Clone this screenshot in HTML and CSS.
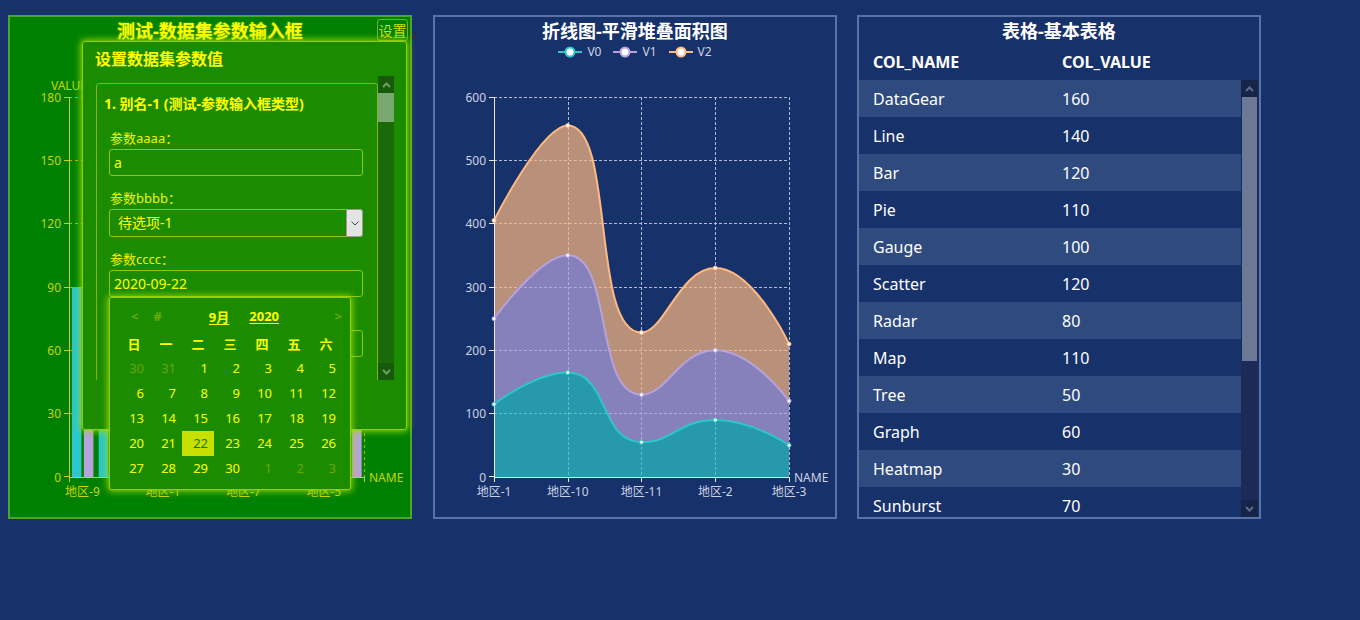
FILE: index.html
```html
<!DOCTYPE html>
<html lang="zh-CN">
<head>
<meta charset="utf-8">
<title>DataGear 看板</title>
<link rel="stylesheet" href="styles.css">
</head>
<body>
<div class="board">

  <!-- Panel 1: bar chart with parameter dialog -->
  <section class="panel panel-green">
    <header class="p1-head">
      <div class="p-title title-yellow">测试-数据集参数输入框</div>
      <button class="btn-settings">设置</button>
    </header>
    <svg class="chart" width="400" height="472" viewBox="10 45 400 472">
      <g class="grid-y" stroke="#a6bc00" stroke-dasharray="3 3" stroke-width="1">
        <line x1="69" y1="97.5" x2="364" y2="97.5"/>
        <line x1="69" y1="160.5" x2="364" y2="160.5"/>
        <line x1="69" y1="223.5" x2="364" y2="223.5"/>
        <line x1="69" y1="287.5" x2="364" y2="287.5"/>
        <line x1="69" y1="350.5" x2="364" y2="350.5"/>
        <line x1="69" y1="413.5" x2="364" y2="413.5"/>
        <line x1="364.5" y1="97" x2="364.5" y2="477"/>
      </g>
      <g fill="#2ec7c9">
        <rect x="71.9" y="287" width="9.5" height="190"/>
        <rect x="98.7" y="265.9" width="9.5" height="211.1"/>
        <rect x="125.5" y="223.7" width="9.5" height="253.3"/>
        <rect x="152.4" y="329.2" width="9.5" height="147.8"/>
        <rect x="179.2" y="160.3" width="9.5" height="316.7"/>
        <rect x="206" y="350.3" width="9.5" height="126.7"/>
        <rect x="232.8" y="202.6" width="9.5" height="274.4"/>
        <rect x="259.6" y="308.1" width="9.5" height="168.9"/>
        <rect x="286.4" y="244.8" width="9.5" height="232.2"/>
        <rect x="313.3" y="392.6" width="9.5" height="84.4"/>
        <rect x="340.1" y="287" width="9.5" height="190"/>
      </g>
      <g fill="#b6a2de">
        <rect x="83.9" y="350.3" width="9.5" height="126.7"/>
        <rect x="110.7" y="308.1" width="9.5" height="168.9"/>
        <rect x="137.5" y="371.4" width="9.5" height="105.6"/>
        <rect x="164.4" y="287" width="9.5" height="190"/>
        <rect x="191.2" y="392.6" width="9.5" height="84.4"/>
        <rect x="218" y="244.8" width="9.5" height="232.2"/>
        <rect x="244.8" y="329.2" width="9.5" height="147.8"/>
        <rect x="271.6" y="265.9" width="9.5" height="211.1"/>
        <rect x="298.4" y="350.3" width="9.5" height="126.7"/>
        <rect x="325.3" y="223.7" width="9.5" height="253.3"/>
        <rect x="352.1" y="329.2" width="9.5" height="147.8"/>
      </g>
      <g stroke="#cad400" stroke-width="1">
        <line x1="69.5" y1="97" x2="69.5" y2="477"/>
        <line x1="64" y1="97.5" x2="69" y2="97.5"/>
        <line x1="64" y1="160.5" x2="69" y2="160.5"/>
        <line x1="64" y1="223.5" x2="69" y2="223.5"/>
        <line x1="64" y1="287.5" x2="69" y2="287.5"/>
        <line x1="64" y1="350.5" x2="69" y2="350.5"/>
        <line x1="64" y1="413.5" x2="69" y2="413.5"/>
        <line x1="64" y1="476.5" x2="69" y2="476.5"/>
        <line x1="69" y1="477.5" x2="365" y2="477.5"/>
        <line x1="69.5" y1="477" x2="69.5" y2="482"/>
        <line x1="364.5" y1="477" x2="364.5" y2="482"/>
      </g>
      <g class="axis-text yellow-text">
        <text x="69" y="85" text-anchor="middle">VALUE</text>
        <text x="61" y="97" text-anchor="end">180</text>
        <text x="61" y="160.3" text-anchor="end">150</text>
        <text x="61" y="223.7" text-anchor="end">120</text>
        <text x="61" y="287" text-anchor="end">90</text>
        <text x="61" y="350.3" text-anchor="end">60</text>
        <text x="61" y="413.7" text-anchor="end">30</text>
        <text x="61" y="477" text-anchor="end">0</text>
        <text x="82.4" y="491" text-anchor="middle">地区-9</text>
        <text x="162.9" y="491" text-anchor="middle">地区-1</text>
        <text x="243.3" y="491" text-anchor="middle">地区-7</text>
        <text x="323.8" y="491" text-anchor="middle">地区-5</text>
        <text x="369" y="477" text-anchor="start">NAME</text>
      </g>
    </svg>

    <div class="dialog">
      <div class="dialog-title">设置数据集参数值</div>
      <div class="dialog-body">
        <div class="form-scroll">
          <div class="form-box">
            <div class="section-head">1. 别名-1 (测试-参数输入框类型)</div>
            <div class="field">
              <label>参数aaaa：</label>
              <div class="input">a</div>
            </div>
            <div class="field">
              <label>参数bbbb：</label>
              <div class="select">
                <span class="select-text">待选项-1</span>
                <span class="select-arrow"><svg width="8" height="5" viewBox="0 0 8 5"><polyline points="0.5,0.5 4,4 7.5,0.5" fill="none" stroke="#444" stroke-width="1"/></svg></span>
              </div>
            </div>
            <div class="field">
              <label>参数cccc：</label>
              <div class="input">2020-09-22</div>
            </div>
            <div class="field">
              <label>参数dddd：</label>
              <div class="input"></div>
            </div>
          </div>
        </div>
        <div class="fscroll">
          <div class="fs-btn"><svg width="9" height="6" viewBox="0 0 9 6"><polyline points="1,5 4.5,1.5 8,5" fill="none" stroke="#6fa062" stroke-width="2"/></svg></div>
          <div class="fs-thumb"></div>
          <div class="fs-track"></div>
          <div class="fs-btn"><svg width="9" height="6" viewBox="0 0 9 6"><polyline points="1,1 4.5,4.5 8,1" fill="none" stroke="#6fa062" stroke-width="2"/></svg></div>
        </div>
      </div>

      <div class="datepicker">
        <div class="dp-head">
          <span class="dp-nav dp-prev">&lt;</span>
          <span class="dp-nav dp-hash">#</span>
          <span class="dp-ym dp-month">9月</span>
          <span class="dp-ym dp-year">2020</span>
          <span class="dp-nav dp-next">&gt;</span>
        </div>
        <div class="dp-week"><span>日</span><span>一</span><span>二</span><span>三</span><span>四</span><span>五</span><span>六</span></div>
        <div class="dp-row"><span class="muted">30</span><span class="muted">31</span><span>1</span><span>2</span><span>3</span><span>4</span><span>5</span></div>
        <div class="dp-row"><span>6</span><span>7</span><span>8</span><span>9</span><span>10</span><span>11</span><span>12</span></div>
        <div class="dp-row"><span>13</span><span>14</span><span>15</span><span>16</span><span>17</span><span>18</span><span>19</span></div>
        <div class="dp-row"><span>20</span><span>21</span><span class="sel">22</span><span>23</span><span>24</span><span>25</span><span>26</span></div>
        <div class="dp-row"><span>27</span><span>28</span><span>29</span><span>30</span><span class="muted">1</span><span class="muted">2</span><span class="muted">3</span></div>
      </div>
    </div>
  </section>

  <!-- Panel 2: smooth stacked area chart -->
  <section class="panel panel-blue panel-line">
    <div class="p-title">折线图-平滑堆叠面积图</div>
    <div class="legend">
      <span class="legend-item"><svg width="24" height="14" viewBox="0 0 24 14"><line x1="0" y1="7" x2="24" y2="7" stroke="#2ec7c9" stroke-width="2"/><circle cx="12" cy="7" r="4.5" fill="#fff" stroke="#2ec7c9" stroke-width="2"/></svg>V0</span>
      <span class="legend-item"><svg width="24" height="14" viewBox="0 0 24 14"><line x1="0" y1="7" x2="24" y2="7" stroke="#b6a2de" stroke-width="2"/><circle cx="12" cy="7" r="4.5" fill="#fff" stroke="#b6a2de" stroke-width="2"/></svg>V1</span>
      <span class="legend-item"><svg width="24" height="14" viewBox="0 0 24 14"><line x1="0" y1="7" x2="24" y2="7" stroke="#ffb980" stroke-width="2"/><circle cx="12" cy="7" r="4.5" fill="#fff" stroke="#ffb980" stroke-width="2"/></svg>V2</span>
    </div>
    <svg class="chart" width="400" height="458" viewBox="435 59 400 458">
      <g stroke="#b4bdd3" stroke-dasharray="3 2" stroke-width="1">
        <line x1="494" y1="97.5" x2="789" y2="97.5"/>
        <line x1="494" y1="160.5" x2="789" y2="160.5"/>
        <line x1="494" y1="223.5" x2="789" y2="223.5"/>
        <line x1="494" y1="287.5" x2="789" y2="287.5"/>
        <line x1="494" y1="350.5" x2="789" y2="350.5"/>
        <line x1="494" y1="413.5" x2="789" y2="413.5"/>
        <line x1="568.5" y1="97" x2="568.5" y2="477"/>
        <line x1="641.5" y1="97" x2="641.5" y2="477"/>
        <line x1="715.5" y1="97" x2="715.5" y2="477"/>
        <line x1="789.5" y1="97" x2="789.5" y2="477"/>
      </g>
      <path fill="#2ec7c9" fill-opacity="0.7" d="M494,404.2 C494,404.2 535.2,372.5 567.75,372.5 C608.9,372.5 599.6,442.2 641.5,442.2 C673.3,442.2 678.6,420 715.25,420 C752.35,420 789,445.3 789,445.3 L789,477 L494,477 Z"/>
      <path fill="#b6a2de" fill-opacity="0.7" d="M494,318.7 C494,318.7 539.6,255.3 567.75,255.3 C613.4,255.3 593.8,394.7 641.5,394.7 C667.5,394.7 679.1,350.3 715.25,350.3 C752.8,350.3 789,401 789,401 L789,445.3 C789,445.3 752.35,420 715.25,420 C678.6,420 673.3,442.2 641.5,442.2 C599.6,442.2 608.9,372.5 567.75,372.5 C535.2,372.5 494,404.2 494,404.2 Z"/>
      <path fill="#ffb980" fill-opacity="0.7" d="M494,220.5 C494,220.5 541.7,125.5 567.75,125.5 C615.4,125.5 590.5,332.6 641.5,332.6 C664.25,332.6 679.8,268 715.25,268 C753.55,268 789,344 789,344 L789,401 C789,401 752.8,350.3 715.25,350.3 C679.1,350.3 667.5,394.7 641.5,394.7 C593.8,394.7 613.4,255.3 567.75,255.3 C539.6,255.3 494,318.7 494,318.7 Z"/>
      <g fill="none" stroke-width="2">
        <path stroke="#2ec7c9" d="M494,404.2 C494,404.2 535.2,372.5 567.75,372.5 C608.9,372.5 599.6,442.2 641.5,442.2 C673.3,442.2 678.6,420 715.25,420 C752.35,420 789,445.3 789,445.3"/>
        <path stroke="#b6a2de" d="M494,318.7 C494,318.7 539.6,255.3 567.75,255.3 C613.4,255.3 593.8,394.7 641.5,394.7 C667.5,394.7 679.1,350.3 715.25,350.3 C752.8,350.3 789,401 789,401"/>
        <path stroke="#ffb980" d="M494,220.5 C494,220.5 541.7,125.5 567.75,125.5 C615.4,125.5 590.5,332.6 641.5,332.6 C664.25,332.6 679.8,268 715.25,268 C753.55,268 789,344 789,344"/>
      </g>
      <g stroke="#e6eaf2" stroke-width="1">
        <line x1="494.5" y1="97" x2="494.5" y2="477"/>
        <line x1="489" y1="97.5" x2="494" y2="97.5"/>
        <line x1="489" y1="160.5" x2="494" y2="160.5"/>
        <line x1="489" y1="223.5" x2="494" y2="223.5"/>
        <line x1="489" y1="287.5" x2="494" y2="287.5"/>
        <line x1="489" y1="350.5" x2="494" y2="350.5"/>
        <line x1="489" y1="413.5" x2="494" y2="413.5"/>
        <line x1="489" y1="476.5" x2="494" y2="476.5"/>
        <line x1="494" y1="477.5" x2="790" y2="477.5"/>
        <line x1="494.5" y1="477" x2="494.5" y2="482"/>
        <line x1="568.5" y1="477" x2="568.5" y2="482"/>
        <line x1="641.5" y1="477" x2="641.5" y2="482"/>
        <line x1="715.5" y1="477" x2="715.5" y2="482"/>
        <line x1="789.5" y1="477" x2="789.5" y2="482"/>
      </g>
      <g fill="#fff" stroke-width="1">
        <g stroke="#2ec7c9">
          <circle cx="494" cy="404.2" r="2"/><circle cx="567.75" cy="372.5" r="2"/><circle cx="641.5" cy="442.2" r="2"/><circle cx="715.25" cy="420" r="2"/><circle cx="789" cy="445.3" r="2"/>
        </g>
        <g stroke="#b6a2de">
          <circle cx="494" cy="318.7" r="2"/><circle cx="567.75" cy="255.3" r="2"/><circle cx="641.5" cy="394.7" r="2"/><circle cx="715.25" cy="350.3" r="2"/><circle cx="789" cy="401" r="2"/>
        </g>
        <g stroke="#ffb980">
          <circle cx="494" cy="220.5" r="2"/><circle cx="567.75" cy="125.5" r="2"/><circle cx="641.5" cy="332.6" r="2"/><circle cx="715.25" cy="268" r="2"/><circle cx="789" cy="344" r="2"/>
        </g>
      </g>
      <g class="axis-text blue-text">
        <text x="486" y="97" text-anchor="end">600</text>
        <text x="486" y="160.3" text-anchor="end">500</text>
        <text x="486" y="223.7" text-anchor="end">400</text>
        <text x="486" y="287" text-anchor="end">300</text>
        <text x="486" y="350.3" text-anchor="end">200</text>
        <text x="486" y="413.7" text-anchor="end">100</text>
        <text x="486" y="477" text-anchor="end">0</text>
        <text x="494" y="491" text-anchor="middle">地区-1</text>
        <text x="567.75" y="491" text-anchor="middle">地区-10</text>
        <text x="641.5" y="491" text-anchor="middle">地区-11</text>
        <text x="715.25" y="491" text-anchor="middle">地区-2</text>
        <text x="789" y="491" text-anchor="middle">地区-3</text>
        <text x="794" y="477" text-anchor="start">NAME</text>
      </g>
    </svg>
  </section>

  <!-- Panel 3: basic table -->
  <section class="panel panel-blue panel-table">
    <div class="p-title">表格-基本表格</div>
    <div class="t-head"><span>COL_NAME</span><span>COL_VALUE</span></div>
    <div class="t-body">
      <div class="t-rows">
        <div class="t-row"><span>DataGear</span><span>160</span></div>
        <div class="t-row"><span>Line</span><span>140</span></div>
        <div class="t-row"><span>Bar</span><span>120</span></div>
        <div class="t-row"><span>Pie</span><span>110</span></div>
        <div class="t-row"><span>Gauge</span><span>100</span></div>
        <div class="t-row"><span>Scatter</span><span>120</span></div>
        <div class="t-row"><span>Radar</span><span>80</span></div>
        <div class="t-row"><span>Map</span><span>110</span></div>
        <div class="t-row"><span>Tree</span><span>50</span></div>
        <div class="t-row"><span>Graph</span><span>60</span></div>
        <div class="t-row"><span>Heatmap</span><span>30</span></div>
        <div class="t-row"><span>Sunburst</span><span>70</span></div>
        <div class="t-row"><span>Sankey</span><span>40</span></div>
        <div class="t-row"><span>Funnel</span><span>90</span></div>
        <div class="t-row"><span>Boxplot</span><span>60</span></div>
        <div class="t-row"><span>Parallel</span><span>20</span></div>
      </div>
      <div class="tscroll">
        <div class="ts-btn"><svg width="9" height="6" viewBox="0 0 9 6"><polyline points="1,5 4.5,1.5 8,5" fill="none" stroke="#5f6c8e" stroke-width="2"/></svg></div>
        <div class="ts-thumb"></div>
        <div class="ts-track"></div>
        <div class="ts-btn"><svg width="9" height="6" viewBox="0 0 9 6"><polyline points="1,1 4.5,4.5 8,1" fill="none" stroke="#5f6c8e" stroke-width="2"/></svg></div>
      </div>
    </div>
  </section>

</div>
</body>
</html>
```

FILE: styles.css
```css
* {
  box-sizing: border-box;
}

html {
  background: #17316a;
}

body {
  margin: 8px;
  background: #17316a;
  font-family: "Noto Sans", "Noto Sans CJK SC", sans-serif;
  color: #ffffff;
}

.board {
  display: flex;
  align-items: flex-start;
  padding-top: 7px;
}

/* ---------- panels ---------- */
.panel {
  position: relative;
  flex: none;
  width: 404px;
  height: 504px;
  border: 2px solid;
  display: flex;
  flex-direction: column;
}

.panel-green {
  background: #008000;
  border-color: #4ca628;
  margin-right: 21px;
}

.panel-blue {
  border-color: #5a72a6;
}

.panel-line {
  margin-right: 20px;
}

.p-title {
  height: 28px;
  line-height: 28px;
  font-size: 18px;
  font-weight: 700;
  text-align: center;
  color: #ffffff;
  white-space: nowrap;
}

.title-yellow {
  color: #ffff00;
  text-shadow: 0 0 2px #8cc800;
}

.chart {
  display: block;
  flex: none;
}

.axis-text text {
  font-size: 12px;
  dominant-baseline: central;
}

.yellow-text {
  fill: #cad400;
}

.blue-text {
  fill: #ccd3e4;
}

/* ---------- panel 1 header ---------- */
.p1-head {
  display: grid;
  grid-template-columns: 1fr auto 1fr;
  height: 28px;
  flex: none;
}

.p1-head .p-title {
  grid-column: 2;
}

.btn-settings {
  grid-column: 3;
  justify-self: end;
  align-self: start;
  margin: 2px 2px 0 0;
  width: 31px;
  height: 22px;
  padding: 0;
  border: 1px solid #6fb424;
  border-radius: 3px;
  background: transparent;
  color: #cde000;
  font-family: "Noto Sans CJK SC", sans-serif;
  font-size: 14px;
  line-height: 20px;
}

/* ---------- dialog ---------- */
.dialog {
  position: absolute;
  left: 72px;
  top: 24px;
  width: 325px;
  height: 389px;
  background: #1b8b00;
  border: 1px solid #8fd00c;
  border-radius: 3px;
  box-shadow: 0 0 7px 1px #9fdc00;
  padding: 0 12px;
}

.dialog-title {
  height: 34px;
  line-height: 34px;
  font-size: 16px;
  font-weight: 700;
  color: #ffff00;
}

.dialog-body {
  display: flex;
  height: 304px;
}

.form-scroll {
  flex: 1;
  overflow: hidden;
}

.form-box {
  margin: 7px 0 0 1px;
  border: 1px solid #82b80c;
  border-radius: 3px;
  padding: 10px 14px 20px 12px;
}

.section-head {
  margin: 0 0 15px -5px;
  font-size: 14px;
  font-weight: 700;
  line-height: 20px;
  color: #ffff00;
  white-space: nowrap;
}

.field {
  margin-bottom: 13px;
}

.field label {
  display: block;
  padding-left: 1px;
  margin-bottom: 2px;
  font-size: 13px;
  line-height: 18px;
  color: #f2f200;
}

.input {
  height: 27px;
  border: 1px solid #8cc80e;
  border-radius: 3px;
  padding: 0 4px;
  font-size: 14px;
  line-height: 25px;
  color: #ffff00;
}

.select {
  display: flex;
  height: 28px;
  border: 1px solid #8cc80e;
  border-radius: 3px;
  font-size: 14px;
  line-height: 26px;
  color: #ffff00;
}

.select-text {
  flex: 1;
  padding-left: 8px;
}

.select-arrow {
  width: 17px;
  display: flex;
  align-items: center;
  justify-content: center;
  background: #e4e4e4;
  border: 1px solid #9a9a9a;
  margin: -1px -1px -1px 0;
  border-radius: 0 3px 3px 0;
}

/* dialog scrollbar */
.fscroll {
  width: 16px;
  flex: none;
  display: flex;
  flex-direction: column;
  background: #1a6a0a;
}

.fs-btn {
  height: 17px;
  display: flex;
  align-items: center;
  justify-content: center;
  background: #175a0c;
}

.fs-thumb {
  height: 29px;
  background: #78a870;
}

.fs-track {
  flex: 1;
}

/* ---------- date picker ---------- */
.datepicker {
  position: absolute;
  left: 26px;
  top: 255px;
  width: 242px;
  height: 193px;
  background: #1b8b00;
  border: 1px solid #8fd00c;
  border-radius: 2px;
  box-shadow: 0 0 7px 1px #9fdc00;
  padding: 5px 8px 8px;
  color: #ffff00;
}

.dp-head {
  display: flex;
  align-items: center;
  height: 26px;
  margin-bottom: 3px;
  font-size: 13px;
  font-weight: 700;
}

.dp-nav {
  color: #6cab00;
}

.dp-prev {
  margin-left: 13px;
}

.dp-hash {
  margin-left: 15px;
}

.dp-ym {
  text-decoration: underline;
  text-underline-offset: 2px;
}

.dp-month {
  margin-left: 47px;
}

.dp-year {
  margin-left: 20px;
}

.dp-next {
  margin-left: auto;
}

.dp-week,
.dp-row {
  display: grid;
  grid-template-columns: repeat(7, 32px);
}

.dp-week span {
  height: 24px;
  line-height: 24px;
  text-align: center;
  font-size: 13px;
  font-weight: 700;
}

.dp-row span {
  height: 25px;
  line-height: 25px;
  text-align: right;
  padding-right: 6px;
  font-size: 13px;
}

.dp-row .muted {
  color: #6aa800;
}

.dp-row .sel {
  background: #c8e000;
  color: #177a00;
}

/* ---------- panel 2 legend ---------- */
.legend {
  display: flex;
  justify-content: center;
  align-items: center;
  gap: 12px;
  height: 14px;
  flex: none;
  font-size: 12px;
  line-height: 14px;
  color: #ccd3e4;
}

.legend-item {
  display: flex;
  align-items: center;
  gap: 5px;
}

.legend-item svg {
  display: block;
}

/* ---------- panel 3 table ---------- */
.t-head {
  display: grid;
  grid-template-columns: 189px 1fr;
  height: 35px;
  line-height: 34px;
  padding-left: 14px;
  font-size: 16px;
  font-weight: 700;
  flex: none;
}

.t-body {
  flex: 1;
  display: flex;
  overflow: hidden;
}

.t-rows {
  width: 382px;
  overflow: hidden;
}

.t-row {
  display: grid;
  grid-template-columns: 189px 1fr;
  height: 37px;
  line-height: 38px;
  padding-left: 14px;
  font-size: 16px;
}

.t-row:nth-child(odd) {
  background: #2e4a7e;
}

.tscroll {
  width: 17px;
  flex: none;
  display: flex;
  flex-direction: column;
  background: #1b2a57;
}

.ts-btn {
  height: 17px;
  display: flex;
  align-items: center;
  justify-content: center;
  background: #152449;
}

.ts-thumb {
  height: 264px;
  margin: 0 1px;
  background: #6c7896;
}

.ts-track {
  flex: 1;
}
```
